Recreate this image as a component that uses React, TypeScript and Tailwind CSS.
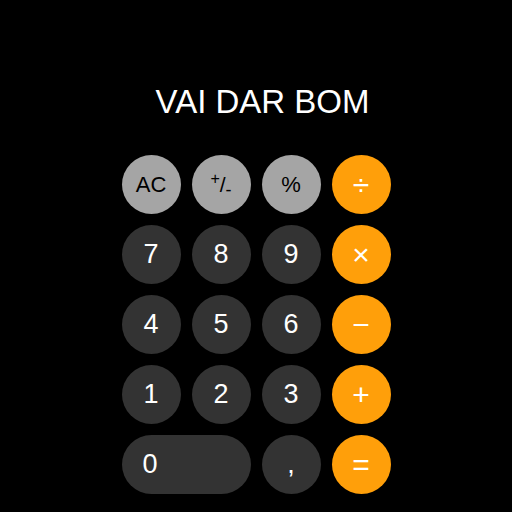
import React from "react"

type Key = { label: React.ReactNode; kind: "fn" | "num" | "op"; wide?: boolean }

const keys: Key[] = [
  { label: "AC", kind: "fn" },
  {
    label: (
      <span className="flex items-center text-[21px]">
        <span className="-translate-y-[6px] text-[16px]">+</span>
        <span>/</span>
        <span className="translate-y-[6px] text-[18px]">-</span>
      </span>
    ),
    kind: "fn",
  },
  { label: "%", kind: "fn" },
  { label: "÷", kind: "op" },
  { label: "7", kind: "num" },
  { label: "8", kind: "num" },
  { label: "9", kind: "num" },
  { label: "×", kind: "op" },
  { label: "4", kind: "num" },
  { label: "5", kind: "num" },
  { label: "6", kind: "num" },
  { label: "−", kind: "op" },
  { label: "1", kind: "num" },
  { label: "2", kind: "num" },
  { label: "3", kind: "num" },
  { label: "+", kind: "op" },
  { label: "0", kind: "num", wide: true },
  { label: ",", kind: "num" },
  { label: "=", kind: "op" },
]

function CalcKey({ k }: { k: Key }) {
  const color =
    k.kind === "fn"
      ? "bg-[#a5a5a5] text-black text-[22px]"
      : k.kind === "op"
        ? "bg-[#ff9f0a] text-white text-[30px]"
        : "bg-[#333333] text-white text-[27px]"

  return (
    <button
      className={`h-[59px] rounded-full flex items-center ${color} ${
        k.wide ? "col-span-2 justify-start pl-[21px]" : "justify-center"
      }`}
    >
      {k.label}
    </button>
  )
}

export default function App() {
  return (
    <div className="w-[512px] h-[512px] bg-black flex flex-col items-center font-['Liberation_Sans',Arial,sans-serif]">
      {/* display */}
      <div className="w-[269px] pt-[85px] h-[155px] text-white text-[33px] leading-none text-right pr-[21px]">
        VAI DAR BOM
      </div>

      {/* teclado */}
      <div className="w-[269px] grid grid-cols-4 gap-[11px]">
        {keys.map((k, i) => (
          <CalcKey key={i} k={k} />
        ))}
      </div>
    </div>
  )
}
